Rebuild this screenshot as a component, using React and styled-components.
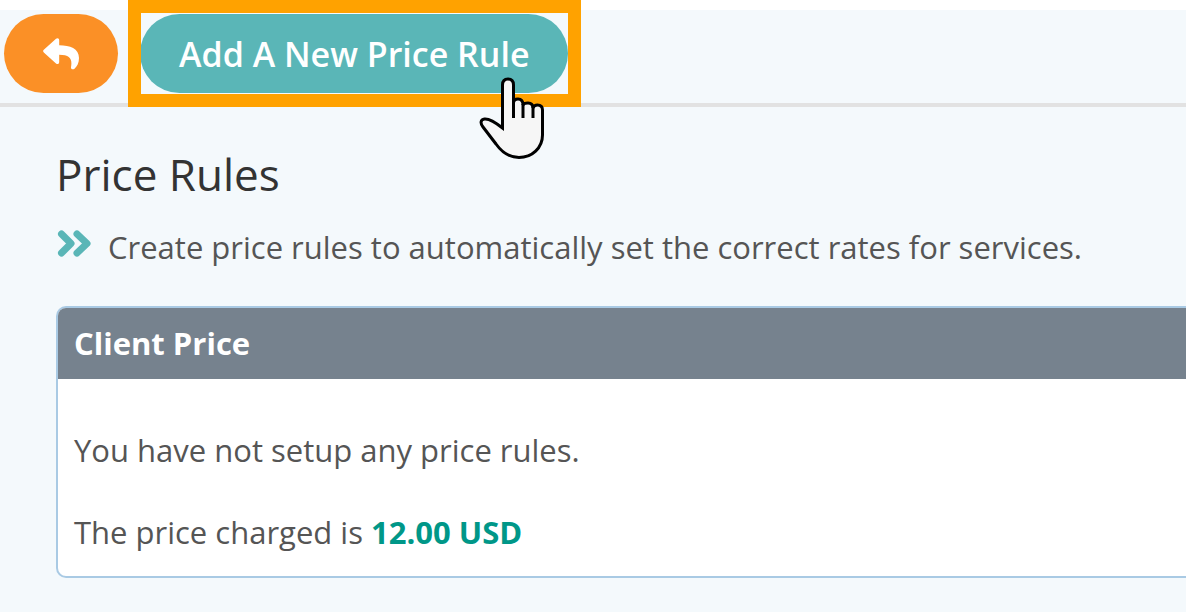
import React from 'react'
import styled, { createGlobalStyle } from 'styled-components'

const GlobalStyle = createGlobalStyle`
  * {
    box-sizing: border-box;
  }
  body {
    margin: 0;
    background: #f4f9fc;
    color: #555;
    font-family: "Open Sans", sans-serif;
    font-size: 31px;
    line-height: 40px;
  }
`

const Toolbar = styled.header`
  display: flex;
  gap: 22px;
  padding: 4px 4px 10px;
  border-top: 10px solid #fff;
  border-bottom: 4px solid #e2e2e2;
`

const PillButton = styled.button`
  display: flex;
  align-items: center;
  justify-content: center;
  height: 79px;
  padding: 0 39px;
  border: 0;
  border-radius: 40px;
  background: ${props => props.$color};
  color: #fff;
  font: 600 34px/40px "Open Sans", sans-serif;
  white-space: nowrap;
  cursor: pointer;
`

const Highlighted = styled.div`
  position: relative;
`

const HighlightFrame = styled.span`
  position: absolute;
  inset: -14px -13px -14px -12px;
  border: 13px solid #ffa200;
  pointer-events: none;
`

const Pointer = styled.svg`
  position: absolute;
  right: 24px;
  top: 63px;
  width: 66px;
  height: 82px;
  pointer-events: none;
`

const Content = styled.main`
  padding: 37px 0 34px 56px;
`

const Title = styled.h1`
  margin: 0;
  color: #333;
  font-size: 44px;
  font-weight: 400;
  line-height: 60px;
`

const Intro = styled.p`
  display: flex;
  align-items: flex-start;
  gap: 16px;
  margin: 23px 0 39px;
`

const Panel = styled.section`
  overflow: hidden;
  border: 2px solid #a9cae4;
  border-right: 0;
  border-radius: 10px 0 0 10px;
  background: #fff;
`

const PanelTitle = styled.h2`
  margin: 0;
  padding: 15px 16px 16px;
  background: #76828e;
  color: #fff;
  font-size: 31px;
  font-weight: 700;
  line-height: 40px;
`

const PanelBody = styled.div`
  display: grid;
  gap: 42px;
  padding: 51px 16px 24px;

  p {
    margin: 0;
  }
`

const Price = styled.strong`
  color: #009788;
  font-weight: 700;
`

const ReplyIcon = () => (
  <svg width="36" height="32" viewBox="0 0 36 32" fill="#fff" aria-hidden="true">
    <path d="M.8 11.800 13 .8C14.500-.5 16.200.3 16.200 2.200V7.300C27 7.300 36 10.500 36 20C36 25 34 28.500 31.500 30.700C30 32 27.800 31.300 28 29.200C29.400 21.500 27.500 16.800 16.200 16.800V24C16.200 26 14.500 26.700 13 25.400L.8 14.400C-.2 13.400-.2 12.800.8 11.800Z" />
  </svg>
)

const ChevronsIcon = () => (
  <svg
    width="36" height="32" viewBox="0 0 36 32" aria-hidden="true"
    fill="none" stroke="#5ab6b7" strokeWidth="7" strokeLinecap="round" strokeLinejoin="round"
  >
    <path d="M5.500 7 15 16.500 5.500 26M21 7 31 16.500 21 26" />
  </svg>
)

const HandPointer = () => (
  <Pointer viewBox="0 0 66 82" aria-hidden="true">
    <path
      d="M24.500 51V8Q24.500 2 30 2Q35.500 2 35.500 8V26Q35.500 22 40 22Q45 22 45 28Q46 26 50 26Q55 26 55 31Q56 28 59.500 28Q64.500 28 64.500 33V58C64.500 71 54 80.500 41 80.500C30 80.500 23 74 18 67L5 50C2 46 2.500 42.500 6.500 42C11 41.500 17 45 24.500 51Z"
      fill="#f6f6f6" stroke="#000" strokeWidth="3" strokeLinejoin="miter"
    />
    <path d="M35.500 26V41M45 27V41M55 29V41" stroke="#000" strokeWidth="3" />
  </Pointer>
)

const App = () => (
  <>
    <GlobalStyle />
    <Toolbar>
      <PillButton $color="#fb9026" aria-label="Back">
        <ReplyIcon />
      </PillButton>
      <Highlighted>
        <PillButton $color="#5ab6b7">Add A New Price Rule</PillButton>
        <HighlightFrame />
        <HandPointer />
      </Highlighted>
    </Toolbar>
    <Content>
      <Title>Price Rules</Title>
      <Intro>
        <ChevronsIcon />
        Create price rules to automatically set the correct rates for services.
      </Intro>
      <Panel>
        <PanelTitle>Client Price</PanelTitle>
        <PanelBody>
          <p>You have not setup any price rules.</p>
          <p>The price charged is <Price>12.00 USD</Price></p>
        </PanelBody>
      </Panel>
    </Content>
  </>
)

export default App
